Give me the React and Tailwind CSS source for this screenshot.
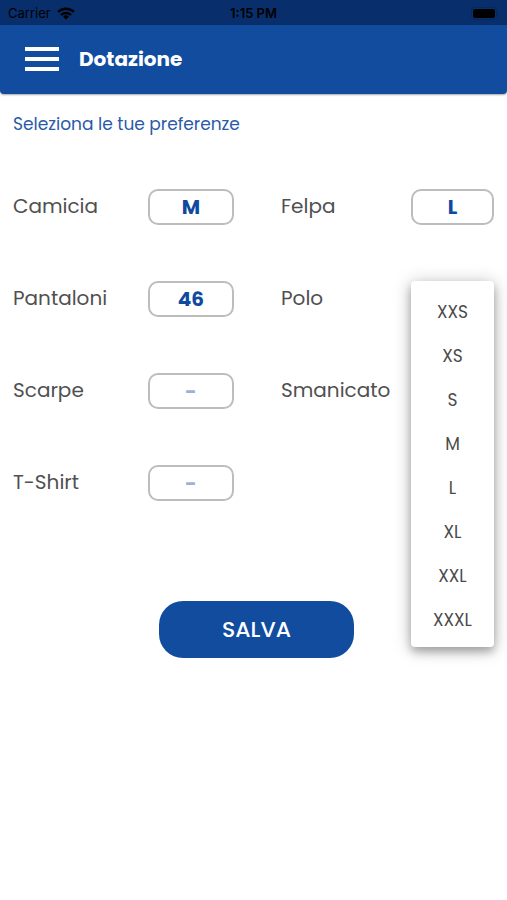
import React, { useState } from "react";

const SIZES = ["XXS", "XS", "S", "M", "L", "XL", "XXL", "XXXL"];
const TROUSERS = ["42", "44", "46", "48", "50", "52", "54"];
const SHOES = ["38", "39", "40", "41", "42", "43", "44", "45"];

const FIELDS = [
  { id: "camicia", label: "Camicia", options: SIZES },
  { id: "felpa", label: "Felpa", options: SIZES },
  { id: "pantaloni", label: "Pantaloni", options: TROUSERS },
  { id: "polo", label: "Polo", options: SIZES },
  { id: "scarpe", label: "Scarpe", options: SHOES },
  { id: "smanicato", label: "Smanicato", options: SIZES },
  { id: "tshirt", label: "T-Shirt", options: SIZES },
];

function StatusBar() {
  return (
    <div className="grid h-[25px] grid-cols-3 items-center bg-[#082f6b] px-2 pt-0.5 font-['Inter',sans-serif] text-[13px] text-black">
      <div className="flex items-center gap-1.5">
        <span>Carrier</span>
        <svg width="18" height="13" viewBox="0 0 18 13" aria-hidden="true">
          <g fill="none" stroke="currentColor" strokeWidth="2.4">
            <path d="M1 4.9a11.6 11.6 0 0 1 16 0" />
            <path d="M4 8a7.2 7.2 0 0 1 10 0" />
          </g>
          <path d="M9 12.6 6.1 9.8a4.1 4.1 0 0 1 5.8 0z" fill="currentColor" />
        </svg>
      </div>
      <span className="text-center font-semibold">1:15 PM</span>
      <svg
        className="justify-self-end"
        width="28"
        height="13"
        viewBox="0 0 28 13"
        aria-hidden="true"
      >
        <rect x="0.5" y="0.5" width="25" height="12" rx="3" fill="none" stroke="#06285c" />
        <rect x="2" y="2" width="22" height="9" rx="2" fill="currentColor" />
        <path d="M27 4.5v4" stroke="#06285c" />
      </svg>
    </div>
  );
}

function SizeMenu({ label, onSelect }) {
  return (
    <div
      role="listbox"
      aria-label={label}
      className="absolute top-0 right-0 z-10 flex w-[39%] flex-col rounded bg-white pt-2.5 pb-1 shadow-[0_5px_8px_rgba(0,0,0,0.25),0_2px_18px_rgba(0,0,0,0.25)]"
    >
      {SIZES.map((size) => (
        <button
          key={size}
          type="button"
          role="option"
          aria-selected="false"
          onClick={() => onSelect(size)}
          className="h-11 w-full text-center text-[17px] text-[#4a4a4a]"
        >
          {size}
        </button>
      ))}
    </div>
  );
}

function Field({ field, value, open, onChange }) {
  return (
    <div className="relative flex items-center justify-between">
      <label htmlFor={field.id} className="pb-0.5 text-xl text-[#505050]">
        {field.label}
      </label>

      <select
        id={field.id}
        value={value}
        onChange={(e) => onChange(field.id, e.target.value)}
        className={`h-9 w-[39%] appearance-none rounded-[10px] border-2 border-[#bdbdbd] bg-white text-center text-xl font-bold ${
          value ? "text-[#104a9e]" : "text-[#9fb0d8]"
        }`}
      >
        <option value="">-</option>
        {field.options.map((option) => (
          <option key={option} value={option}>
            {option}
          </option>
        ))}
      </select>

      {open && (
        <SizeMenu
          label={field.label}
          onSelect={(size) => onChange(field.id, size)}
        />
      )}
    </div>
  );
}

export default function App() {
  const [openField, setOpenField] = useState("polo");
  const [values, setValues] = useState({
    camicia: "M",
    felpa: "L",
    pantaloni: "46",
  });

  const handleChange = (id, value) => {
    setValues((prev) => ({ ...prev, [id]: value }));
    setOpenField(null);
  };

  return (
    <div className="min-h-screen bg-white font-['Poppins','Inter',sans-serif]">
      <StatusBar />

      <header className="flex h-[69px] items-center gap-5 rounded-b bg-[#114c9f] px-[25px] pb-0.5 shadow-[0_1px_2px_rgba(0,0,0,0.35)]">
        <button type="button" aria-label="Menu" className="flex w-[34px] flex-col gap-1.5">
          <span className="h-1 bg-white" />
          <span className="h-1 bg-white" />
          <span className="h-1 bg-white" />
        </button>
        <h1 className="text-xl font-bold text-white">Dotazione</h1>
      </header>

      <main className="px-[13px] pt-4">
        <p className="text-[17px] leading-7 text-[#2a5aa8]">
          Seleziona le tue preferenze
        </p>

        <form onSubmit={(e) => e.preventDefault()} className="mt-[51px]">
          <div className="grid grid-cols-[221fr_213fr] gap-x-[47px] gap-y-14">
            {FIELDS.map((field) => (
              <Field
                key={field.id}
                field={field}
                value={values[field.id] || ""}
                open={openField === field.id}
                onChange={handleChange}
              />
            ))}
          </div>

          <div className="mt-[100px] flex justify-center pl-1.5">
            <button
              type="submit"
              className="h-[57px] w-[195px] rounded-3xl bg-[#114c9f] text-[22px] font-medium text-white"
            >
              SALVA
            </button>
          </div>
        </form>
      </main>
    </div>
  );
}
